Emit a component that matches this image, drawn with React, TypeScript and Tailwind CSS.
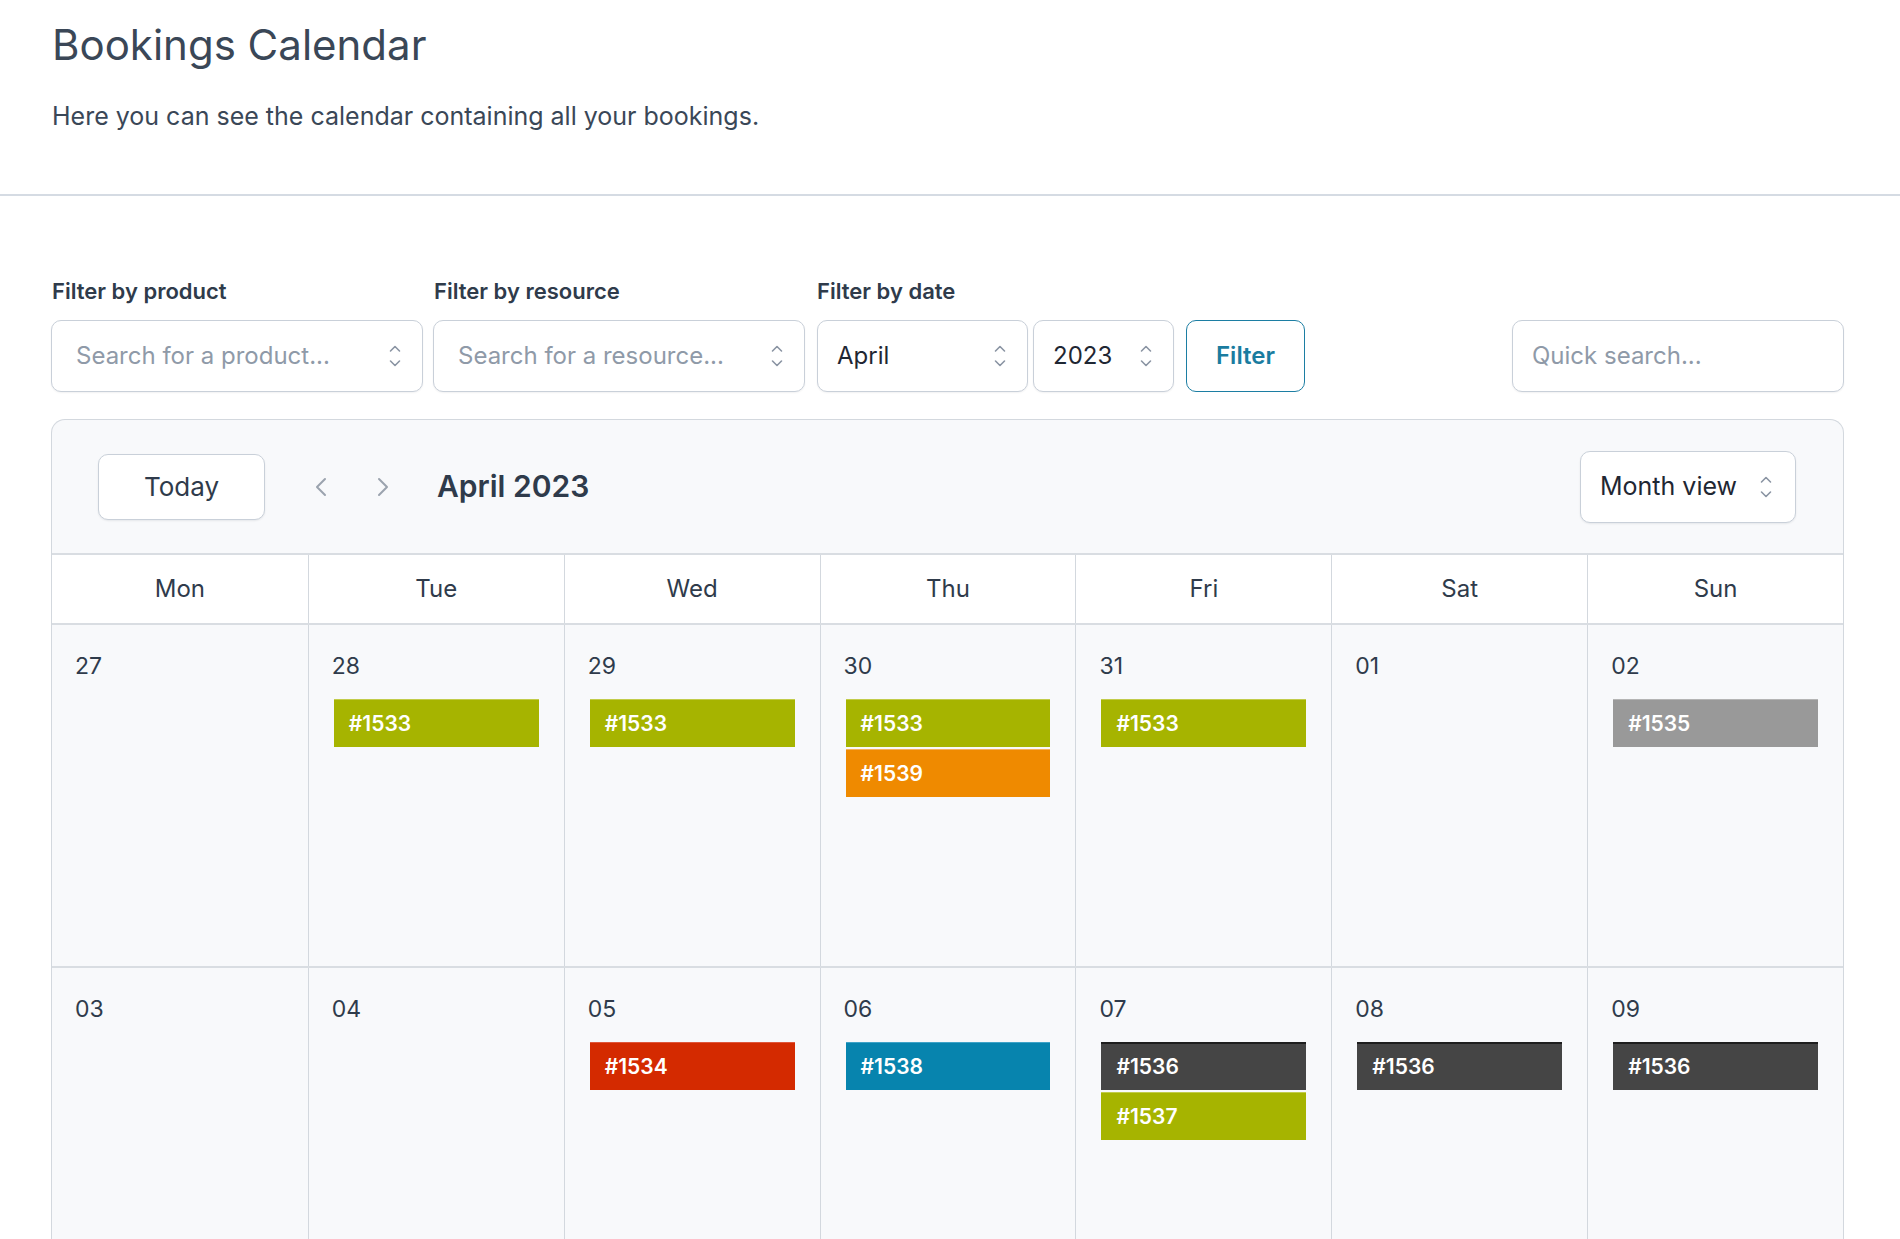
import { ChevronLeft, ChevronRight } from "lucide-react";

type Booking = { id: string; color: string };

const GREEN = "bg-[#a6b400] border-t border-[#c2cc4a]";
const ORANGE = "bg-[#ef8a00] border-t border-[#f5b05a]";
const GREY = "bg-[#999999] border-t border-[#b5b5b5]";
const RED = "bg-[#d42a00] border-t border-[#e0563a]";
const BLUE = "bg-[#0784ae] border-t border-[#3ea3c8]";
const DARK = "bg-[#454545] border-t-2 border-[#1e1e1e]";

const days = ["Mon", "Tue", "Wed", "Thu", "Fri", "Sat", "Sun"];

const weeks: { date: string; bookings: Booking[] }[][] = [
  [
    { date: "27", bookings: [] },
    { date: "28", bookings: [{ id: "#1533", color: GREEN }] },
    { date: "29", bookings: [{ id: "#1533", color: GREEN }] },
    {
      date: "30",
      bookings: [
        { id: "#1533", color: GREEN },
        { id: "#1539", color: ORANGE },
      ],
    },
    { date: "31", bookings: [{ id: "#1533", color: GREEN }] },
    { date: "01", bookings: [] },
    { date: "02", bookings: [{ id: "#1535", color: GREY }] },
  ],
  [
    { date: "03", bookings: [] },
    { date: "04", bookings: [] },
    { date: "05", bookings: [{ id: "#1534", color: RED }] },
    { date: "06", bookings: [{ id: "#1538", color: BLUE }] },
    {
      date: "07",
      bookings: [
        { id: "#1536", color: DARK },
        { id: "#1537", color: GREEN },
      ],
    },
    { date: "08", bookings: [{ id: "#1536", color: DARK }] },
    { date: "09", bookings: [{ id: "#1536", color: DARK }] },
  ],
];

function UpDown() {
  return (
    <svg width="14" height="28" viewBox="0 0 14 28" fill="none" className="shrink-0">
      <path d="M2.5 9 7 4.5 11.5 9" stroke="#8a94a3" strokeWidth="1.6" strokeLinecap="round" strokeLinejoin="round" />
      <path d="M2.5 19 7 23.5 11.5 19" stroke="#8a94a3" strokeWidth="1.6" strokeLinecap="round" strokeLinejoin="round" />
    </svg>
  );
}

function SelectBox({
  text,
  placeholder,
  width,
  pad = "pl-[19px]",
}: {
  text: string;
  placeholder?: boolean;
  width: string;
  pad?: string;
}) {
  return (
    <div
      className={`${width} ${pad} flex h-[72px] items-center justify-between rounded-[10px] border border-[#c9d0d9] bg-white pr-[20px] shadow-[0_1px_2px_rgba(15,23,42,0.06)]`}
    >
      <span className={placeholder ? "text-[24px] text-[#8f9aa8]" : "text-[24px] text-[#1f2733]"}>{text}</span>
      <UpDown />
    </div>
  );
}

export default function App() {
  return (
    <div className="min-h-screen bg-white font-['Inter','Noto_Sans',sans-serif] text-[#334155]">
      <div className="pl-[52px] pt-[20px]">
        <h1 className="text-[42px] font-normal leading-[50px] text-[#3a4757]">Bookings Calendar</h1>
        <p className="mt-[30px] text-[25px] leading-[32px] text-[#3a4757]">
          Here you can see the calendar containing all your bookings.
        </p>
      </div>
      <div className="mt-[62px] border-b-2 border-[#d5dbe3]" />

      <div className="pl-[51px] pr-[56px]">
        <div className="mt-[82px] flex items-end">
          <div className="flex flex-col">
            <label className="mb-[16px] pl-px text-[22px] font-semibold leading-[26px] text-[#2f3b4b]">Filter by product</label>
            <SelectBox text="Search for a product..." placeholder width="w-[372px]" pad="pl-[24px]" />
          </div>
          <div className="ml-[10px] flex flex-col">
            <label className="mb-[16px] pl-px text-[22px] font-semibold leading-[26px] text-[#2f3b4b]">Filter by resource</label>
            <SelectBox text="Search for a resource..." placeholder width="w-[372px]" pad="pl-[24px]" />
          </div>
          <div className="ml-[12px] flex flex-col">
            <label className="mb-[16px] text-[22px] font-semibold leading-[26px] text-[#2f3b4b]">Filter by date</label>
            <div className="flex items-center">
              <SelectBox text="April" width="w-[211px]" />
              <div className="ml-[5px]">
                <SelectBox text="2023" width="w-[141px]" />
              </div>
              <button className="ml-[12px] h-[72px] w-[119px] rounded-[10px] border-[1.5px] border-[#1c7ea3] bg-white text-[24px] font-semibold text-[#1a7ca0]">
                Filter
              </button>
            </div>
          </div>
          <div className="flex-1" />
          <div className="flex h-[72px] w-[332px] items-center rounded-[10px] border border-[#c9d0d9] bg-white pl-[19px] shadow-[0_1px_2px_rgba(15,23,42,0.06)]">
            <span className="text-[24px] text-[#8f9aa8]">Quick search...</span>
          </div>
        </div>

        <div className="mt-[27px] overflow-hidden rounded-t-[14px] border border-b-0 border-[#d3d8de] bg-[#f8f9fb]">
          <div className="flex h-[133px] items-center pl-[46px] pr-[47px]">
            <button className="h-[66px] w-[167px] rounded-[10px] border border-[#c9d0d9] bg-white text-[26px] text-[#2f3b4b] shadow-[0_1px_2px_rgba(15,23,42,0.08)]">
              Today
            </button>
            <div className="ml-[40px] flex items-center gap-[30px] text-[#9ba3ae]">
              <ChevronLeft size={32} strokeWidth={1.5} />
              <ChevronRight size={32} strokeWidth={1.5} />
            </div>
            <div className="ml-[38px] text-[30px] font-semibold text-[#2f3b4b]">April 2023</div>
            <div className="flex-1" />
            <div className="flex h-[72px] w-[216px] items-center justify-between rounded-[10px] border border-[#c9d0d9] bg-white pl-[19px] pr-[22px] shadow-[0_1px_2px_rgba(15,23,42,0.08)]">
              <span className="text-[25px] text-[#1f2733]">Month view</span>
              <UpDown />
            </div>
          </div>

          <div className="grid grid-cols-7 border-t-2 border-[#d9dde2] bg-white">
            {days.map((d, i) => (
              <div
                key={d}
                className={`flex h-[68px] items-center justify-center text-[24px] text-[#2f3b4b] ${i > 0 ? "border-l border-[#d3d8de]" : ""}`}
              >
                {d}
              </div>
            ))}
          </div>

          {weeks.map((week, w) => (
            <div key={w} className="grid grid-cols-7 border-t-2 border-[#d9dde2]">
              {week.map((cell, i) => (
                <div
                  key={i}
                  className={`h-[341px] pl-[23px] pr-[25px] pt-[27px] ${i > 0 ? "border-l border-[#d3d8de]" : ""}`}
                >
                  <div className="text-[23px] leading-[28px] text-[#2f3b4b]">{cell.date}</div>
                  <div className="mt-[19px] flex flex-col gap-[2px] pl-[2px]">
                    {cell.bookings.map((b, k) => (
                      <div
                        key={k}
                        className={`flex h-[48px] items-center pl-[15px] text-[21px] font-semibold text-white ${b.color}`}
                      >
                        {b.id}
                      </div>
                    ))}
                  </div>
                </div>
              ))}
            </div>
          ))}
        </div>
      </div>
    </div>
  );
}
